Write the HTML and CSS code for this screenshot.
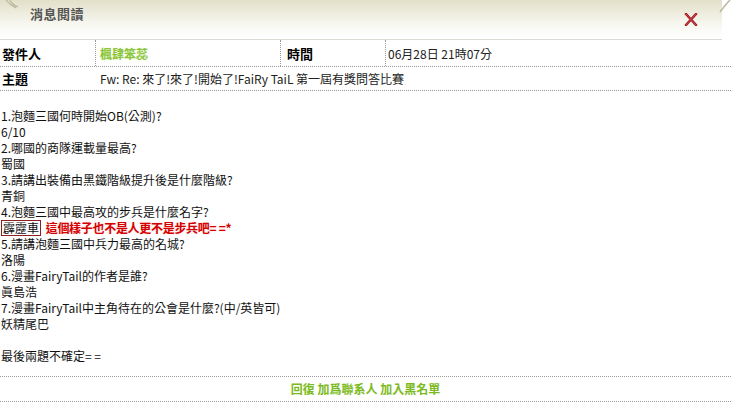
FILE: index.html
```html
<!DOCTYPE html>
<html lang="zh-Hant">
<head>
<meta charset="utf-8">
<title>消息閱讀</title>
<link rel="stylesheet" href="styles.css">
</head>
<body>
<div class="page">
  <div class="header">
    <svg class="leaf leaf-left" width="20" height="14" viewBox="0 0 20 14"><path d="M2 0 C5 4 8 6 12 8 M6 0 C7 3 9 5 14 7" stroke="#b8b59a" stroke-width="1.2" fill="none"/></svg>
    <h1 class="title">消息閱讀</h1>
    <svg class="close" width="14" height="13" viewBox="0 0 14 13"><path d="M2 1 L12 12 M12 1 L2 12" stroke="#a01a22" stroke-width="2.6" stroke-linecap="round"/><path d="M2 1 L12 12 M12 1 L2 12" stroke="#d0444c" stroke-width="1" stroke-linecap="round"/></svg>
    <svg class="leaf leaf-right" width="14" height="14" viewBox="0 0 14 14"><path d="M2 12 C5 8 8 4 12 0" stroke="#b8b59a" stroke-width="1.4" fill="none"/></svg>
  </div>
  <div class="meta">
    <div class="row">
      <div class="cell label">發件人</div>
      <div class="cell sender">楓肆笨蕊</div>
      <div class="cell label label2">時間</div>
      <div class="cell value">06月28日 21時07分</div>
    </div>
    <div class="row">
      <div class="cell label">主題</div>
      <div class="cell subject">Fw: Re: 來了!來了!開始了!FaiRy TaiL 第一屆有獎問答比賽</div>
    </div>
  </div>
  <div class="body">
    <p>1.泡麵三國何時開始OB(公測)?</p>
    <p>6/10</p>
    <p>2.哪國的商隊運載量最高?</p>
    <p>蜀國</p>
    <p>3.請講出裝備由黑鐵階級提升後是什麼階級?</p>
    <p>青銅</p>
    <p>4.泡麵三國中最高攻的步兵是什麼名字?</p>
    <p><span class="boxed">霹靂車</span> <span class="red">這個樣子也不是人更不是步兵吧= =*</span></p>
    <p>5.請講泡麵三國中兵力最高的名城?</p>
    <p>洛陽</p>
    <p>6.漫畫FairyTail的作者是誰?</p>
    <p>眞島浩</p>
    <p>7.漫畫FairyTail中主角待在的公會是什麼?(中/英皆可)</p>
    <p>妖精尾巴</p>
    <p class="blank">&nbsp;</p>
    <p>最後兩題不確定= =</p>
  </div>
  <div class="actions">
    <a href="#">回復</a> <a href="#">加爲聯系人</a> <a href="#">加入黑名單</a>
  </div>
</div>
</body>
</html>
```
FILE: styles.css
```css
html, body {
  margin: 0;
  padding: 0;
  background: #fff;
}
body {
  font-family: "Noto Sans CJK TC", "Liberation Sans", sans-serif;
  font-size: 12px;
  color: #111;
}
.page {
  width: 733px;
  height: 407px;
  overflow: hidden;
}
.header {
  position: relative;
  height: 39px;
  width: 722px;
  background: linear-gradient(to bottom, #e2e0c9 0%, #ecebdc 30%, #f8f8f2 65%, #ffffff 100%);
  border-bottom: 1px solid #dcdcd4;
  display: flex;
  align-items: flex-start;
}
.title {
  margin: 6px 0 0 30px;
  font-size: 13px;
  font-weight: bold;
  color: #555;
  line-height: 16px;
  letter-spacing: 0.5px;
}
.leaf {
  position: absolute;
  top: 0;
}
.leaf-left { left: 4px; }
.leaf-right { right: -10px; }
.close {
  position: absolute;
  left: 684px;
  top: 13px;
}
.meta {
  width: 731px;
}
.row {
  display: flex;
  height: 26px;
  border-bottom: 1px dotted #9a9a9a;
  align-items: stretch;
}
.row + .row {
  height: 23px;
}
.cell {
  display: flex;
  align-items: center;
  padding-left: 3px;
  box-sizing: border-box;
}
.label {
  width: 96px;
  font-weight: bold;
  font-size: 13px;
  color: #000;
  padding-left: 2px;
  border-right: 1px dotted #9a9a9a;
}
.row + .row .label { border-right: none; }
.sender {
  width: 185px;
  color: #8cc43c;
  font-weight: bold;
  font-size: 12px;
  padding-left: 4px;
  text-shadow: 0 0 2px #e4f5c8;
  border-right: 1px dotted #9a9a9a;
}
.label2 {
  width: 105px;
  padding-left: 6px;
}
.value {
  flex: 1;
  color: #222;
  padding-left: 2px;
}
.subject {
  flex: 1;
  color: #222;
  padding-left: 4px;
}
.body {
  padding-top: 17px;
  padding-left: 1px;
  height: 286px;
  box-sizing: border-box;
  border-bottom: 1px dotted #9a9a9a;
  width: 731px;
}
.body p {
  margin: 0;
  height: 16px;
  line-height: 16px;
  color: #111;
  white-space: nowrap;
}
.boxed {
  display: inline-block;
  border: 1px solid #8a2020;
  line-height: 14px;
  padding: 0 1px;
}
.red {
  color: #d40000;
  font-weight: bold;
  text-shadow: 0 0 2px #ffd0d0;
  margin-left: 2px;
  letter-spacing: -0.3px;
}
.actions {
  width: 731px;
  height: 24px;
  line-height: 24px;
  text-align: center;
  border-bottom: 1px dotted #9a9a9a;
}
.actions a {
  color: #7cba22;
  font-weight: bold;
  text-decoration: none;
  font-size: 12px;
}
```
